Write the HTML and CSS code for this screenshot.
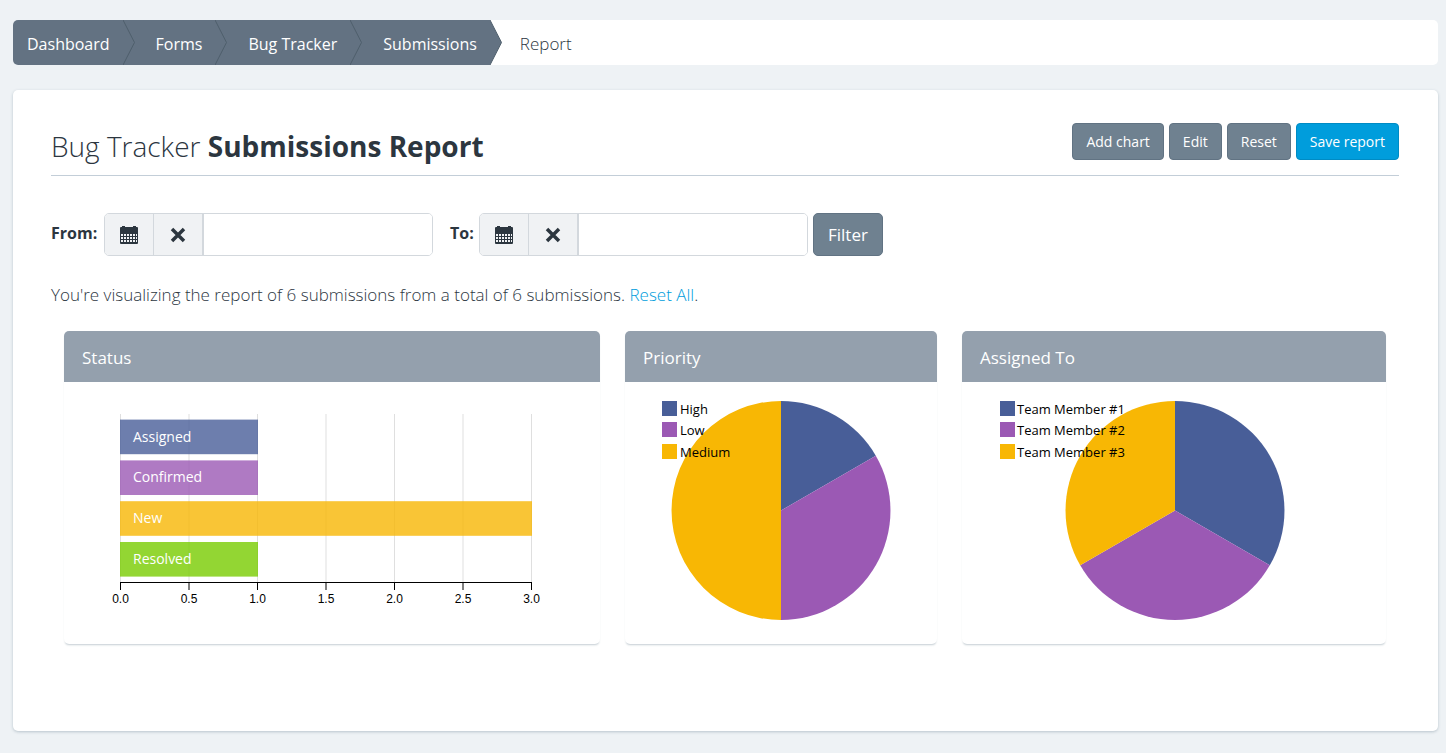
FILE: index.html
```html
<!DOCTYPE html>
<html lang="en">
<head>
    <meta charset="UTF-8">
    <meta name="viewport" content="width=device-width, initial-scale=1.0">
    <title>Bug Tracker Submissions Report</title>
    <link rel="stylesheet" href="styles.css">
</head>
<body>
    <nav class="breadcrumb" aria-label="Breadcrumb">
        <a class="crumb" href="#dashboard">Dashboard<svg class="arrow" viewBox="0 0 12 45" aria-hidden="true"><path d="M0 0L11.500 22.500L0 45"/></svg></a>
        <a class="crumb" href="#forms">Forms<svg class="arrow" viewBox="0 0 12 45" aria-hidden="true"><path d="M0 0L11.500 22.500L0 45"/></svg></a>
        <a class="crumb" href="#form">Bug Tracker<svg class="arrow" viewBox="0 0 12 45" aria-hidden="true"><path d="M0 0L11.500 22.500L0 45"/></svg></a>
        <a class="crumb" href="#submissions">Submissions<svg class="arrow" viewBox="0 0 12 45" aria-hidden="true"><path d="M0 0L11.500 22.500L0 45"/></svg></a>
        <span class="crumb-active">Report</span>
    </nav>

    <main class="panel">
        <div class="page-header">
            <h1>Bug Tracker <strong>Submissions Report</strong></h1>
            <div class="actions">
                <button class="btn" type="button">Add chart</button>
                <button class="btn" type="button">Edit</button>
                <button class="btn" type="button">Reset</button>
                <button class="btn btn-primary" type="button">Save report</button>
            </div>
        </div>

        <form class="filters">
            <label for="from">From:</label>
            <div class="input-group">
                <button class="addon" type="button" aria-label="Pick start date"><svg viewBox="0 0 18 18" aria-hidden="true"><use href="#calendar"/></svg></button>
                <button class="addon" type="button" aria-label="Clear start date"><svg viewBox="0 0 18 18" aria-hidden="true"><use href="#remove"/></svg></button>
                <input type="text" id="from">
            </div>
            <label class="label-to" for="to">To:</label>
            <div class="input-group">
                <button class="addon" type="button" aria-label="Pick end date"><svg viewBox="0 0 18 18" aria-hidden="true"><use href="#calendar"/></svg></button>
                <button class="addon" type="button" aria-label="Clear end date"><svg viewBox="0 0 18 18" aria-hidden="true"><use href="#remove"/></svg></button>
                <input type="text" id="to">
            </div>
            <button class="btn btn-filter" type="button">Filter</button>
        </form>

        <p class="summary">You're visualizing the report of 6 submissions from a total of 6 submissions. <a href="#reset">Reset All</a>.</p>

        <div class="charts">
            <section class="card">
                <h2>Status</h2>
                <svg class="row-chart" viewBox="0 0 500 262" role="img" aria-label="Submissions by status">
                    <g class="grid" id="grid"></g>
                    <g id="bars"></g>
                    <g class="axis" id="axis"></g>
                </svg>
            </section>

            <section class="card">
                <h2>Priority</h2>
                <svg class="pie-chart" viewBox="0 0 276 262" role="img" aria-label="Submissions by priority">
                    <g transform="translate(138 128.500)">
                        <path class="blue" d="M0 0V-109.500A109.500 109.500 0 0 1 94.800 -54.750Z"/>
                        <path class="purple" d="M0 0L94.800 -54.750A109.500 109.500 0 0 1 0 109.500Z"/>
                        <path class="yellow" d="M0 0V109.500A109.500 109.500 0 0 1 0 -109.500Z"/>
                    </g>
                    <g class="legend">
                        <rect class="blue" x="19" y="19" width="15" height="15"/><text x="37" y="32">High</text>
                        <rect class="purple" x="19" y="40" width="15" height="15"/><text x="37" y="53">Low</text>
                        <rect class="yellow" x="19" y="62" width="15" height="15"/><text x="37" y="75">Medium</text>
                    </g>
                </svg>
            </section>

            <section class="card">
                <h2>Assigned To</h2>
                <svg class="pie-chart" viewBox="0 0 388 262" role="img" aria-label="Submissions by assignee">
                    <g transform="translate(195 128.500)">
                        <path class="blue" d="M0 0V-109.500A109.500 109.500 0 0 1 94.800 54.750Z"/>
                        <path class="purple" d="M0 0L94.800 54.750A109.500 109.500 0 0 1 -94.800 54.750Z"/>
                        <path class="yellow" d="M0 0L-94.800 54.750A109.500 109.500 0 0 1 0 -109.500Z"/>
                    </g>
                    <g class="legend">
                        <rect class="blue" x="20" y="19" width="15" height="15"/><text x="37" y="32">Team Member #1</text>
                        <rect class="purple" x="20" y="40" width="15" height="15"/><text x="37" y="53">Team Member #2</text>
                        <rect class="yellow" x="20" y="62" width="15" height="15"/><text x="37" y="75">Team Member #3</text>
                    </g>
                </svg>
            </section>
        </div>
    </main>

    <svg class="sprite" width="0" height="0" aria-hidden="true">
        <symbol id="calendar" viewBox="0 0 18 18">
            <path fill-rule="evenodd" d="M0 2Q0 1 1 1H2V0H5V1H13V0H16V1H17Q18 1 18 2V17Q18 18 17 18H1Q0 18 0 17ZM1 8V10H3V8ZM4 8V10H6V8ZM7 8V10H9V8ZM10 8V10H12V8ZM13 8V10H15V8ZM16 8V10H17V8ZM1 11V13H3V11ZM4 11V13H6V11ZM7 11V13H9V11ZM10 11V13H12V11ZM13 11V13H15V11ZM16 11V13H17V11ZM1 14V16H3V14ZM4 14V16H6V14ZM7 14V16H9V14ZM10 14V16H12V14ZM13 14V16H15V14ZM16 14V16H17V14Z"/>
        </symbol>
        <symbol id="remove" viewBox="0 0 18 18">
            <path d="M3 3L15 15M15 3L3 15" stroke="#2c363f" stroke-width="3.500"/>
        </symbol>
    </svg>

    <script>
        const statuses = [
            { label: 'Assigned', value: 1, color: '#485e98' },
            { label: 'Confirmed', value: 1, color: '#9b59b4' },
            { label: 'New', value: 3, color: '#f8b704' },
            { label: 'Resolved', value: 1, color: '#78cc00' }
        ];
        const left = 38;
        const unit = 137;

        // Row bars
        document.getElementById('bars').innerHTML = statuses.map((s, i) => {
            const y = 37.6 + i * 40.8;
            return `
                <rect class="bar" x="${left}" y="${y}" width="${s.value * unit + 1}" height="34.600" fill="${s.color}"/>
                <text class="bar-label" x="${left + 13}" y="${Math.round(y) + 22}">${s.label}</text>
            `;
        }).join('');

        // Grid lines and ticks every half unit
        let grid = '';
        let axis = `<path d="M${left} 200.500H${left + 3 * unit + 1}"/>`;
        for (let v = 0; v <= 3; v += 0.5) {
            const x = left + v * unit + 0.5;
            grid += `<path d="M${x} 32V200"/>`;
            axis += `<path d="M${x} 200V208"/><text x="${x}" y="221">${v.toFixed(1)}</text>`;
        }
        document.getElementById('grid').innerHTML = grid;
        document.getElementById('axis').innerHTML = axis;
    </script>
</body>
</html>
```

FILE: styles.css
```css
* { margin: 0; padding: 0; box-sizing: border-box; }
body { font-family: 'Open Sans', 'Noto Sans', sans-serif; font-size: 17px; font-weight: 300; color: #2c363f; background: #eef2f5; padding: 20px 8px 20px 13px; }
button, input { font: inherit; color: inherit; }

.breadcrumb { display: flex; height: 45px; margin-bottom: 25px; background: white; border-radius: 5px; overflow: hidden; line-height: 48px; }
.crumb { position: relative; background: #637282; color: white; text-decoration: none; font-weight: 400; font-size: 16px; padding: 0 13px 0 33px; }
.crumb:first-child { padding-left: 14px; }
.arrow { position: absolute; left: 100%; top: 0; z-index: 1; width: 12px; height: 45px; fill: #637282; stroke: #4f5f6c; }
.crumb-active { padding-left: 30px; }

.panel { background: white; border-radius: 5px; padding: 33px 39px 87px 38px; box-shadow: 0 1px 3px rgba(60,90,110,0.3); }
.page-header { display: flex; justify-content: space-between; align-items: flex-start; height: 53px; margin-bottom: 37px; border-bottom: 1px solid #c3ced8; }
h1 { font-size: 28px; font-weight: 300; line-height: 46px; }
h1 strong { font-weight: 700; }
.actions { display: flex; gap: 5px; }
.btn { height: 37px; padding: 0 13px; background: #6f8190; border: 1px solid #617383; border-radius: 4px; color: white; font-size: 14px; font-weight: 400; cursor: pointer; }
.btn-primary { background: #009ddc; border-color: #008bc4; }
.btn-filter { height: 43px; padding: 0 14px; font-size: 17px; margin-left: 5px; border-radius: 5px; }

.filters { display: flex; margin-bottom: 24px; }
.filters label { font-size: 16px; font-weight: 700; line-height: 40px; width: 53px; }
.filters .label-to { width: 29px; margin-left: 17px; }
.input-group { display: flex; width: 329px; height: 43px; border: 1px solid #d3d8dd; border-radius: 5px; overflow: hidden; }
.addon { width: 49px; border: none; border-right: 1px solid #d3d8dd; background: #f0f2f4; cursor: pointer; }
.addon svg { display: block; width: 18px; height: 18px; margin: 0 auto; fill: #2c363f; }
.input-group input { flex: 1; min-width: 0; border: none; border-left: 1px solid #d3d8dd; padding: 0 12px; background: white; }

.summary { line-height: 30px; margin-bottom: 21px; }
.summary a { color: #009ddc; text-decoration: none; }

.charts { display: grid; grid-template-columns: 536fr 312fr 424fr; gap: 25px; padding: 0 13px; }
.card { border-radius: 5px; box-shadow: 0 2px 2px -1px rgba(60,90,110,0.3); overflow: hidden; }
.card h2 { height: 51px; padding: 0 18px; background: #94a0ad; color: white; font-size: 17px; font-weight: 400; line-height: 53px; }
.card svg { display: block; width: calc(100% - 36px); margin: 0 auto; }
.blue { fill: #485e98; }
.purple { fill: #9b59b4; }
.yellow { fill: #f8b704; }
.legend text { font-size: 13px; font-weight: 400; }
.bar { opacity: 0.8; }
.bar-label { fill: white; font-size: 14px; font-weight: 400; }
.grid path { stroke: #dfdfdf; }
.axis path { stroke: black; }
.axis text { font-family: 'Liberation Sans', sans-serif; font-size: 12px; font-weight: 400; text-anchor: middle; }
.sprite { position: absolute; }
```
